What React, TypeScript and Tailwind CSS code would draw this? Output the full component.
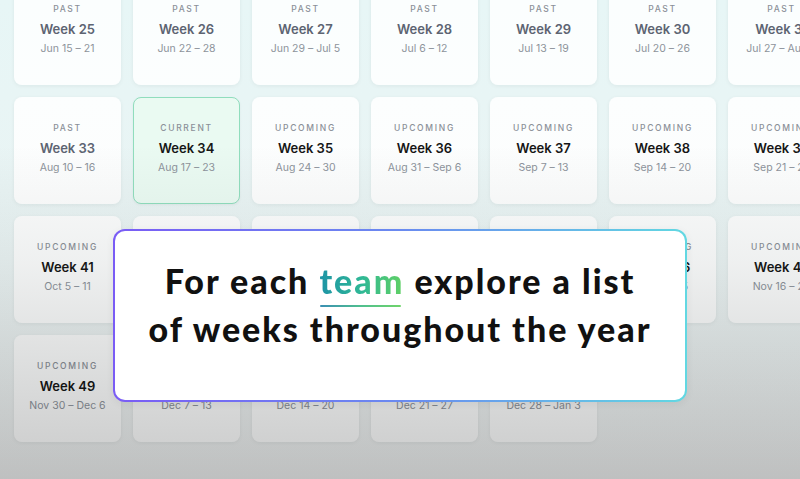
import React from "react";

type Status = "PAST" | "CURRENT" | "UPCOMING";
type Week = { n: number; range: string; status: Status };

const ranges: Record<number, string> = {
  25: "Jun 15 – 21", 26: "Jun 22 – 28", 27: "Jun 29 – Jul 5", 28: "Jul 6 – 12",
  29: "Jul 13 – 19", 30: "Jul 20 – 26", 31: "Jul 27 – Aug 2", 32: "Aug 3 – 9",
  33: "Aug 10 – 16", 34: "Aug 17 – 23", 35: "Aug 24 – 30", 36: "Aug 31 – Sep 6",
  37: "Sep 7 – 13", 38: "Sep 14 – 20", 39: "Sep 21 – 27", 40: "Sep 28 – Oct 4",
  41: "Oct 5 – 11", 42: "Oct 12 – 18", 43: "Oct 19 – 25", 44: "Oct 26 – Nov 1",
  45: "Nov 2 – 8", 46: "Nov 9 – 15", 47: "Nov 16 – 22", 48: "Nov 23 – 29",
  49: "Nov 30 – Dec 6", 50: "Dec 7 – 13", 51: "Dec 14 – 20", 52: "Dec 21 – 27",
  53: "Dec 28 – Jan 3",
};

const weeks: Week[] = [];
for (let n = 25; n <= 53; n++) {
  weeks.push({ n, range: ranges[n], status: n < 34 ? "PAST" : n === 34 ? "CURRENT" : "UPCOMING" });
}

function Card({ w }: { w: Week }) {
  const isCurrent = w.status === "CURRENT";
  const isPast = w.status === "PAST";
  return (
    <div
      className={
        "h-[107px] w-[107px] rounded-[8px] flex flex-col items-center justify-center pb-[2px] " +
        (isCurrent
          ? "bg-[#eafaf2] border border-[#90ddbd] shadow-[0_1px_3px_rgba(0,0,0,0.05)]"
          : "bg-white/85 shadow-[0_1px_4px_rgba(0,40,40,0.06)]")
      }
    >
      <div className="text-[8.5px] leading-[14px] tracking-[0.2em] text-[#8b9098] font-medium">
        {w.status}
      </div>
      <div
        className={
          "mt-[3px] text-[13px] leading-[20px] font-semibold " +
          (isPast ? "text-[#5d6472]" : "text-[#161616]")
        }
      >
        Week {w.n}
      </div>
      <div className="text-[10.5px] leading-[20px] text-[#8d939b]">{w.range}</div>
    </div>
  );
}

export default function App() {
  return (
    <div
      className="relative w-[800px] h-[479px] overflow-hidden bg-[linear-gradient(180deg,#e7f6f6_0%,#e9f4f4_40%,#eef0f0_100%)]"
      style={{ fontFamily: "Inter, 'Noto Sans', sans-serif" }}
    >
      <div className="grid grid-cols-[repeat(8,107px)] gap-x-[12px] gap-y-[12px] pl-[14px] mt-[-22px]">
        {weeks.map((w) => (
          <Card key={w.n} w={w} />
        ))}
      </div>

      <div className="pointer-events-none absolute inset-0 bg-[linear-gradient(180deg,rgba(0,0,0,0)_0%,rgba(0,0,0,0)_30%,rgba(20,30,30,0.06)_55%,rgba(0,0,0,0.2)_100%)]" />

      <div className="absolute left-[113px] top-[229px] w-[574px] h-[173px] rounded-[12px] p-[2px] bg-[linear-gradient(90deg,#7a5cf5_0%,#6a8af0_50%,#62d8e2_100%)] shadow-[0_2px_8px_rgba(0,0,0,0.06)]">
        <div className="w-full h-full rounded-[10px] bg-white flex flex-col items-center pt-[26px]">
          <div
            className="text-center text-[#111] font-black text-[34px] leading-[48px] tracking-[0.058em]"
            style={{ fontFamily: "Lato, 'Noto Sans', sans-serif" }}
          >
            <div>
              For each{" "}
              <span className="relative inline-block">
                <span className="bg-[linear-gradient(90deg,#1d93a6_0%,#2fb896_50%,#62d163_100%)] bg-clip-text text-transparent">
                  team
                </span>
                <span className="absolute left-[1px] right-[3px] bottom-[-2px] h-[2px] rounded-full bg-[linear-gradient(90deg,#3a8fb3_0%,#4fbf8f_50%,#6fd46a_100%)]" />
              </span>{" "}
              explore a list
            </div>
            <div>of weeks throughout the year</div>
          </div>
        </div>
      </div>
    </div>
  );
}
